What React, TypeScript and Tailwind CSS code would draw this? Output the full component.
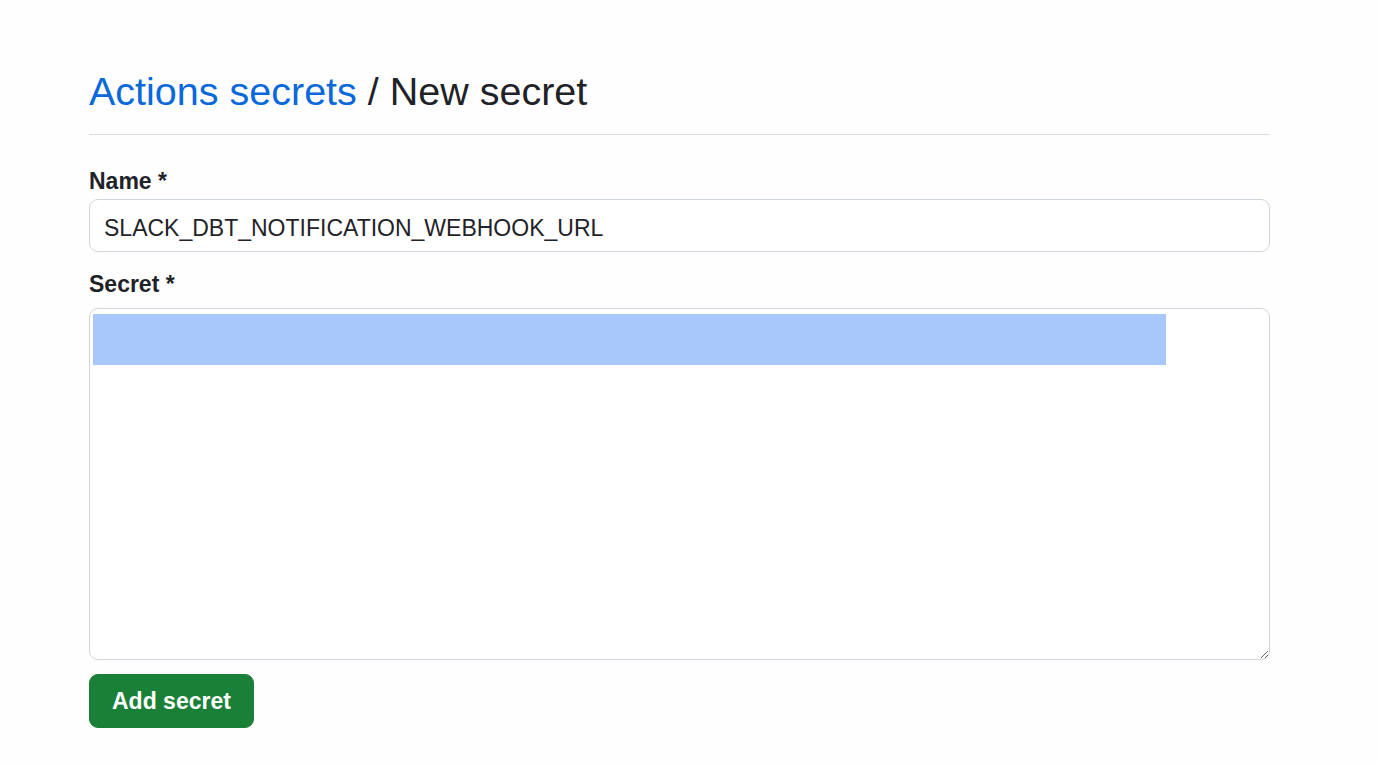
import React from "react";

const App = () => {
    return (
        <div className="min-h-[766px] bg-[#fefefe] pl-[89px] pr-[108px] pt-[66px] font-['Liberation_Sans',Arial,sans-serif] text-[#1f2328]">
            <h1 className="border-b border-[#d8dee4] pb-[18px] text-[39.5px] leading-[50px] font-normal">
                <a href="#" className="text-[#0969da]">Actions secrets</a>
                <span> / New secret</span>
            </h1>

            <form className="mt-[30px] flex flex-col">
                <label className="text-[23px] leading-[33px] font-bold">Name *</label>
                <input
                    type="text"
                    defaultValue="SLACK_DBT_NOTIFICATION_WEBHOOK_URL"
                    className="mt-[1px] h-[53px] w-full rounded-[9px] border border-[#cfd5dc] bg-white px-[14px] pt-[6px] text-[23px] text-[#1f2328] outline-none"
                />

                <label className="mt-[16px] text-[23px] leading-[33px] font-bold">Secret *</label>
                <div className="mt-[7px] h-[352px] w-full resize-y overflow-auto rounded-[9px] border border-[#cfd5dc] bg-white pl-[3px] pt-[5px]">
                    <div className="h-[51px] w-[1073px] bg-[#a8c7fa]"></div>
                </div>

                <div className="mt-[14px]">
                    <button
                        type="button"
                        className="h-[54px] rounded-[9px] border border-[#1a7f37] bg-[#1a7f37] px-[22px] text-[23px] font-bold text-white"
                    >
                        Add secret
                    </button>
                </div>
            </form>
        </div>
    );
};

export default App;
